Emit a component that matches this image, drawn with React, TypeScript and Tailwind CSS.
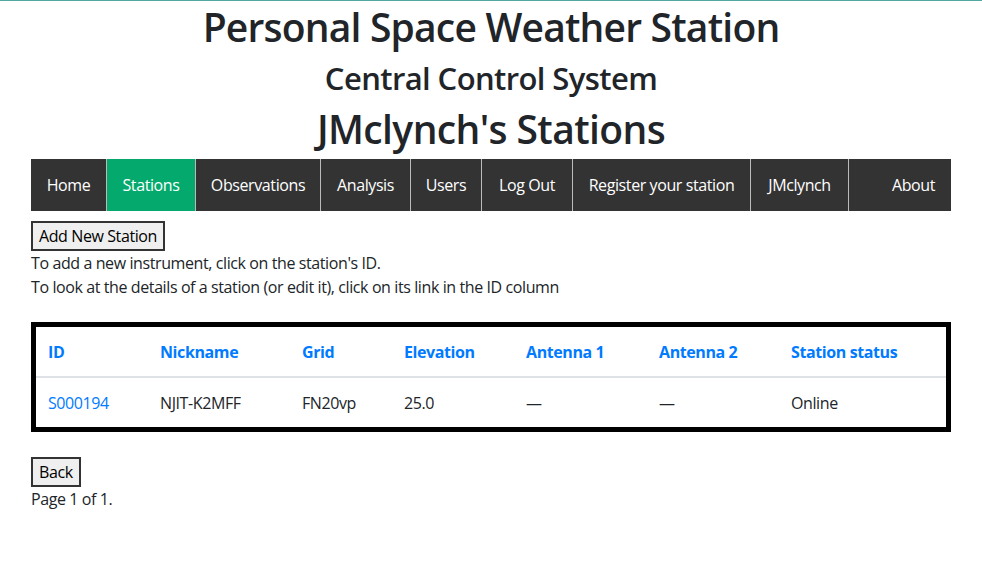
const columns = [
  { label: 'ID', w: 'w-[112px]' },
  { label: 'Nickname', w: 'w-[142px]' },
  { label: 'Grid', w: 'w-[102px]' },
  { label: 'Elevation', w: 'w-[122px]' },
  { label: 'Antenna 1', w: 'w-[133px]' },
  { label: 'Antenna 2', w: 'w-[132px]' },
  { label: 'Station status', w: 'w-[167px]' },
];

const navItems = [
  { label: 'Home', w: 'w-[76px]' },
  { label: 'Stations', w: 'w-[89px]', active: true },
  { label: 'Observations', w: 'w-[125px]' },
  { label: 'Analysis', w: 'w-[90px]' },
  { label: 'Users', w: 'w-[71px]' },
  { label: 'Log Out', w: 'w-[91px]' },
  { label: 'Register your station', w: 'w-[178px]' },
  { label: 'JMclynch', w: 'w-[98px]' },
];

export default function App() {
  return (
    <div className="min-h-[571px] bg-white border-t border-[#4fa9a0] text-[#212529] text-[16px] leading-6 tracking-[-0.4px] font-['Open_Sans','Noto_Sans',sans-serif]">
      <h1 className="pt-[2px] text-center text-[39px] leading-[48px] font-semibold tracking-[-0.8px] mb-2">Personal Space Weather Station</h1>
      <h2 className="text-center text-[31px] leading-[38px] font-semibold tracking-[-0.6px] mb-2">Central Control System</h2>
      <h1 className="text-center text-[39px] leading-[48px] font-semibold tracking-[-0.6px] mb-[6px]">JMclynch's Stations</h1>

      <div className="mx-[31px]">
        <ul className="flex bg-[#333333] h-[52px] text-white">
          {navItems.map((item) => (
            <li
              key={item.label}
              className={`${item.w} flex items-center justify-center border-r border-[#bbbbbb] ${item.active ? 'bg-[#04aa6d]' : ''}`}
            >
              {item.label}
            </li>
          ))}
          <li className="ml-auto flex items-center px-4">About</li>
        </ul>

        <button className="mt-[10px] border-2 border-[#333] bg-[#efefef] px-[6px] py-px leading-6 text-black">Add New Station</button>
        <p>To add a new instrument, click on the station's ID.</p>
        <p>To look at the details of a station (or edit it), click on its link in the ID column</p>

        <div className="mt-[23px] border-[5px] border-black">
          <table className="w-full text-left table-fixed">
            <thead>
              <tr className="border-b-2 border-[#dee2e6]">
                {columns.map((c) => (
                  <th key={c.label} className={`${c.w} px-3 pt-[13px] pb-[12px] font-bold text-[#007bff]`}>{c.label}</th>
                ))}
              </tr>
            </thead>
            <tbody>
              <tr>
                <td className="px-3 pt-[13px] pb-[12px] text-[#007bff]">S000194</td>
                <td className="px-3 pt-[13px] pb-[12px]">NJIT-K2MFF</td>
                <td className="px-3 pt-[13px] pb-[12px]">FN20vp</td>
                <td className="px-3 pt-[13px] pb-[12px]">25.0</td>
                <td className="px-3 pt-[13px] pb-[12px]">—</td>
                <td className="px-3 pt-[13px] pb-[12px]">—</td>
                <td className="px-3 pt-[13px] pb-[12px]">Online</td>
              </tr>
            </tbody>
          </table>
        </div>

        <button className="mt-[25px] border-2 border-[#333] bg-[#efefef] px-[6px] py-px leading-6 text-black">Back</button>
        <p>Page 1 of 1.</p>
      </div>
    </div>
  );
}
